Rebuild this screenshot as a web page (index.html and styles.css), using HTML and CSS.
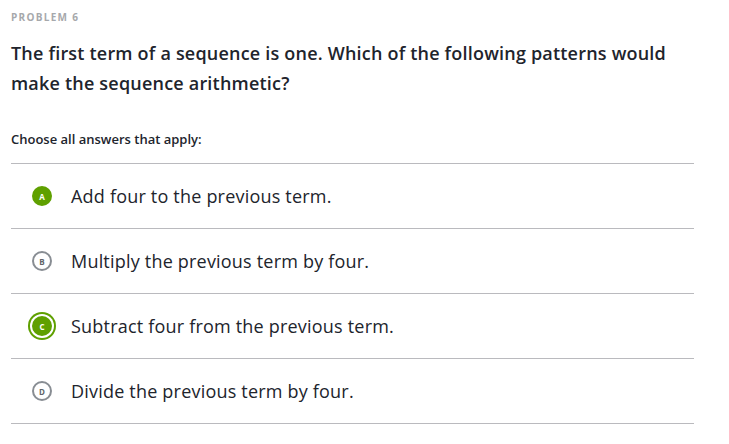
FILE: index.html
```html
<!DOCTYPE html>
<html>
<head>
<meta charset="utf-8">
<link rel="stylesheet" href="styles.css">
</head>
<body>
<div class="problem">
  <div class="label">PROBLEM 6</div>
  <h1 class="question">The first term of a sequence is one. Which of the following patterns would make the sequence arithmetic?</h1>
  <div class="instr">Choose all answers that apply:</div>
  <ul class="choices">
    <li class="choice"><span class="bubble filled">A</span><span class="text">Add four to the previous term.</span></li>
    <li class="choice"><span class="bubble">B</span><span class="text">Multiply the previous term by four.</span></li>
    <li class="choice"><span class="bubble filled focus">C</span><span class="text">Subtract four from the previous term.</span></li>
    <li class="choice"><span class="bubble">D</span><span class="text">Divide the previous term by four.</span></li>
  </ul>
</div>
</body>
</html>
```
FILE: styles.css
```css
html, body {
  margin: 0;
  padding: 0;
  background: #ffffff;
}
body {
  font-family: "Open Sans", Lato, sans-serif;
  color: #21242c;
}
.problem {
  width: 683px;
  padding: 10px 0 0 11px;
}
.label {
  font-size: 10px;
  font-weight: 700;
  letter-spacing: 1.3px;
  color: #a6a8ab;
  line-height: 14px;
}
.question {
  margin: 14px 0 0 0;
  font-size: 18px;
  font-weight: 600;
  letter-spacing: 0.2px;
  line-height: 30px;
  color: #21242c;
  width: 672px;
}
.instr {
  margin-top: 33px;
  font-size: 13px;
  font-weight: 600;
  line-height: 16px;
}
.choices {
  list-style: none;
  margin: 16px 0 0 0;
  padding: 0;
  border-top: 1px solid #bababe;
}
.choice {
  display: flex;
  align-items: center;
  height: 64px;
  border-bottom: 1px solid #bababe;
  padding-left: 21px;
}
.bubble {
  box-sizing: border-box;
  width: 20px;
  height: 20px;
  border-radius: 50%;
  border: 2px solid #888d93;
  display: flex;
  align-items: center;
  justify-content: center;
  font-size: 8px;
  font-weight: 700;
  color: #626569;
  flex: none;
}
.bubble.filled {
  background: #5fa000;
  border-color: #5fa000;
  color: #ffffff;
}
.bubble.focus {
  box-shadow: 0 0 0 2px #ffffff, 0 0 0 4px #5fa000;
}
.text {
  margin-left: 19px;
  font-size: 18px;
  letter-spacing: 0.2px;
  line-height: 24px;
  color: #21242c;
}
```
